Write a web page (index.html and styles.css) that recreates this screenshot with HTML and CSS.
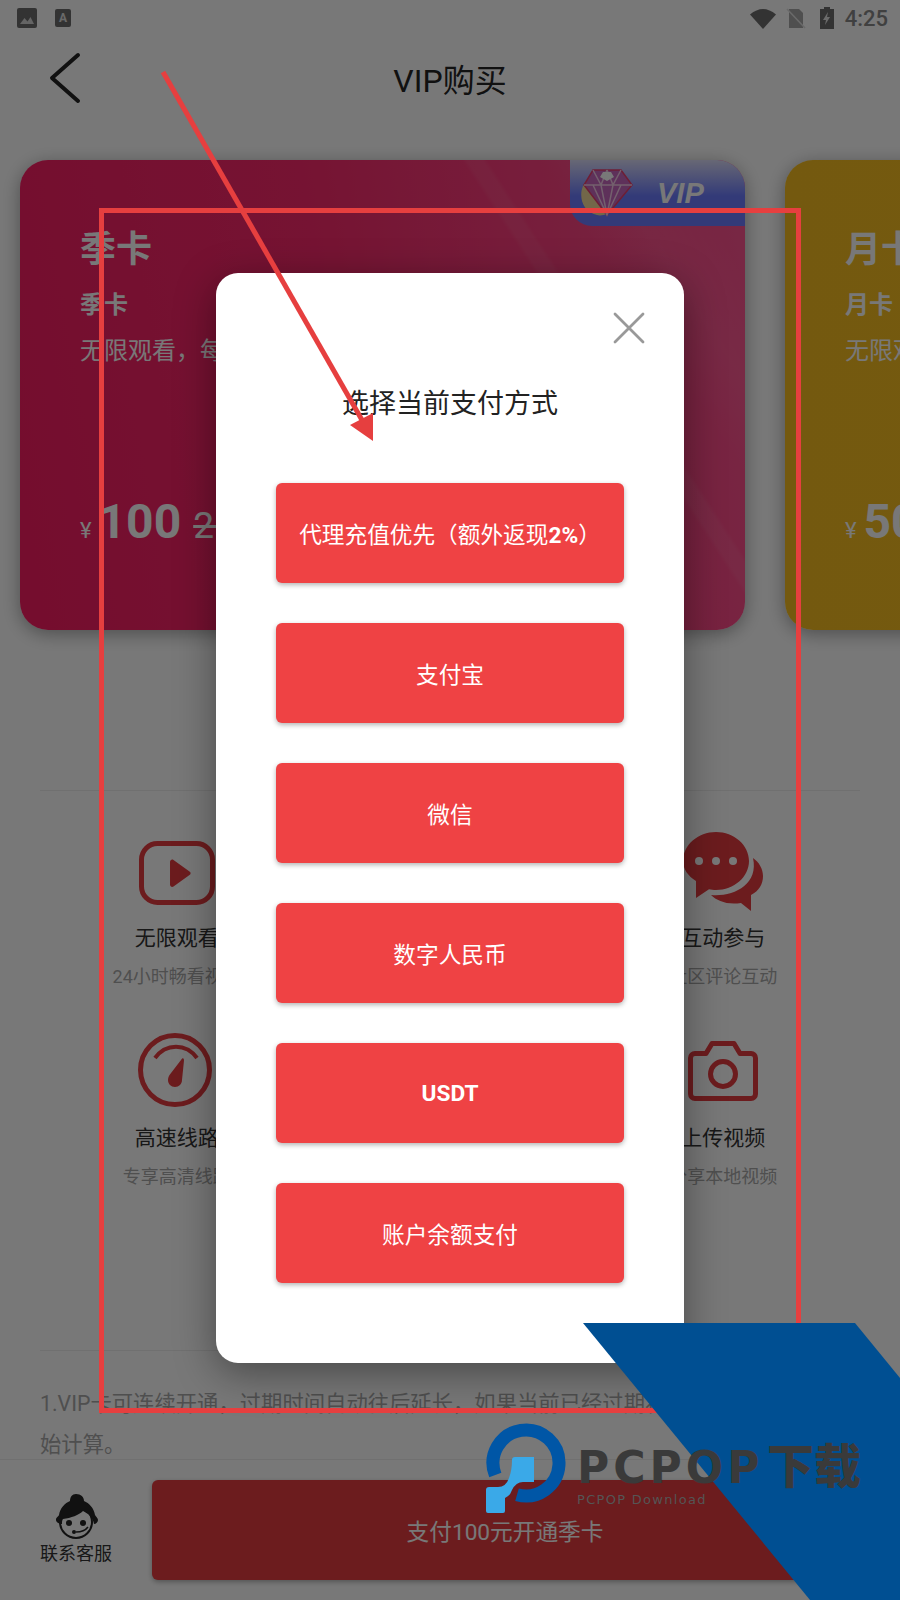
FILE: index.html
```html
<!DOCTYPE html>
<html lang="zh-CN">
<head>
<meta charset="utf-8">
<title>VIP购买</title>
<link rel="stylesheet" href="styles.css">
</head>
<body>
<div class="screen">
  <div class="page">
    <div class="status">
      <svg class="st-img" width="20" height="20" viewBox="0 0 20 20"><rect width="20" height="20" rx="2" fill="#6e6e6e"/><path d="M3 16l4.500-6 3 3.500 3-4.500 3.500 7z" fill="#d4d4d4"/></svg>
      <span class="st-a">A</span>
      <span class="st-space"></span>
      <svg class="st-wifi" width="26" height="21" viewBox="0 0 26 21"><path d="M0 6.500Q13-4.500 26 6.500L13 21z" fill="#6e6e6e"/></svg>
      <svg class="st-sim" width="20" height="21" viewBox="0 0 20 21"><path d="M3 1h10l4 4v15H3z" fill="#a8a8a8"/><path d="M1 1l18 19" stroke="#e0e0e0" stroke-width="1.600"/></svg>
      <svg class="st-bat" width="14" height="22" viewBox="0 0 14 22"><path d="M4 0h6v2h4v20H0V2h4z" fill="#6e6e6e"/><path d="M8 5L3 13h3l-1 5 5-8H7z" fill="#e4e4e4"/></svg>
      <span class="st-time">4:25</span>
    </div>

    <header class="bar">
      <svg class="back" width="36" height="56" viewBox="0 0 36 56"><path d="M30 4L4 27l26 23" fill="none" stroke="#242424" stroke-width="4" stroke-linecap="round" stroke-linejoin="round"/></svg>
      <h1 class="bar-title">VIP购买</h1>
      <span></span>
    </header>

    <main class="main">
      <section class="cards">
        <article class="card card-red">
          <div class="tag">
            <svg width="56" height="52" viewBox="0 0 56 52">
              <path d="M9 12C-2 22 0 44 18 48c3 1 7 0 10-1z" fill="#f2dc9c"/>
              <path d="M14 3h28l11 15-25 30L5 18z" fill="#c868c0" stroke="#e84070" stroke-width="1.500"/>
              <path d="M5 18h48M14 3l8 15 6 30 6-30 8-15M28 3l-6 15M28 3l6 15M14 18l14 30 14-30" fill="none" stroke="#f4cce8" stroke-width="1.500"/>
              <path d="M24 5h8l3 5-7 4-7-4z" fill="#fff"/>
            </svg>
            <span class="tag-text">VIP</span>
          </div>
          <h2 class="card-title">季卡</h2>
          <p class="card-sub">季卡</p>
          <p class="card-desc">无限观看，每日更新</p>
          <p class="price"><span class="yen">¥</span><b class="now">100</b><s class="old">250</s></p>
        </article>
        <article class="card card-gold">
          <h2 class="card-title">月卡</h2>
          <p class="card-sub">月卡</p>
          <p class="card-desc">无限观看，每日更新</p>
          <p class="price"><span class="yen">¥</span><b class="now">50</b></p>
        </article>
      </section>

      <section class="perks">
        <div class="perk">
          <svg class="perk-icon" width="80" height="80" viewBox="0 0 80 80"><rect x="4.500" y="12.500" width="71" height="59" rx="16" fill="none" stroke="#e63c40" stroke-width="5"/><path d="M33 31c0-2 2-3 3.500-2l16 11.500c1.500 1 1.500 2.500 0 3.500l-16 11.500c-1.500 1-3.500 0-3.500-2z" fill="#e63c40"/></svg>
          <div class="perk-name">无限观看</div>
          <div class="perk-text">24小时畅看视频</div>
        </div>
        <div class="perk"></div>
        <div class="perk">
          <svg class="perk-icon" width="80" height="80" viewBox="0 0 80 80"><path d="M33 1C51 1 66 14 66 30S51 59 33 59c-2.500 0-5-.300-7-.700L13 67V50C5 45 0 38 0 30 0 14 15 1 33 1z" fill="#e63c40"/><path d="M70 27c6 4 10 11 10 18 0 8-4 15-12 19v16l-10-8c-14 2-24-2-30-8 22 2 48-10 42-37z" fill="#e63c40"/><circle cx="16" cy="30" r="4" fill="#fff"/><circle cx="33" cy="30" r="4" fill="#fff"/><circle cx="50" cy="30" r="4" fill="#fff"/></svg>
          <div class="perk-name">互动参与</div>
          <div class="perk-text">社区评论互动</div>
        </div>
        <div class="perk">
          <svg class="perk-icon" width="80" height="80" viewBox="0 0 80 80"><circle cx="38" cy="39" r="34.500" fill="none" stroke="#e63c40" stroke-width="5"/><path d="M18 27C29 12 49 12 60 27" fill="none" stroke="#e63c40" stroke-width="4"/><path d="M44 29c1.500-2.500 3-2 3 .500L45 49c0 4-3 7-7 7s-7-3-7-7c0-2 .500-3 1.500-5z" fill="#e63c40"/></svg>
          <div class="perk-name">高速线路</div>
          <div class="perk-text">专享高清线路</div>
        </div>
        <div class="perk"></div>
        <div class="perk">
          <svg class="perk-icon" width="80" height="80" viewBox="0 0 80 80"><path d="M12 22.500h11l6-10h22l6 10h11c2.500 0 4.500 2 4.500 4.500v36c0 2.500-2 4.500-4.500 4.500H12c-2.500 0-4.500-2-4.500-4.500V27c0-2.500 2-4.500 4.500-4.500z" fill="none" stroke="#e63c40" stroke-width="5" stroke-linejoin="round"/><circle cx="40" cy="43" r="12.500" fill="none" stroke="#e63c40" stroke-width="5"/></svg>
          <div class="perk-name">上传视频</div>
          <div class="perk-text">分享本地视频</div>
        </div>
      </section>

      <section class="note">1.VIP卡可连续开通，过期时间自动往后延长，如果当前已经过期将从购买时刻开<br>始计算。</section>
    </main>

    <footer class="foot">
      <div class="service">
        <svg width="44" height="46" viewBox="0 0 44 46">
          <circle cx="22" cy="29" r="16" fill="#fff" stroke="#242424" stroke-width="2"/>
          <path d="M22 1c5 0 8 3 8 7 5 2 10 7 11 14 1 2 3 3 3 5s-2 4-4 4c-1-6-5-10-11-13-4 4-12 7-20 8-1 1-1 3-1 5-3 0-6-2-6-4 0-3 2-3 3-5 1-7 6-12 11-14 0-4 2-7 6-7z" fill="#242424"/>
          <circle cx="15" cy="30" r="3" fill="#242424"/>
          <circle cx="29" cy="30" r="3" fill="#242424"/>
          <path d="M22 39c5 0 9-1 12-5" fill="none" stroke="#242424" stroke-width="1.500"/>
          <circle cx="20" cy="39" r="2" fill="#242424"/>
        </svg>
        <span class="service-text">联系客服</span>
      </div>
      <button class="pay">支付100元开通季卡</button>
    </footer>
  </div>

  <div class="dim"></div>

  <div class="modal">
    <svg class="close" width="34" height="34" viewBox="0 0 34 34"><path d="M3 3l28 28M31 3L3 31" stroke="#999" stroke-width="2.800" stroke-linecap="round"/></svg>
    <h2 class="modal-title">选择当前支付方式</h2>
    <div class="methods">
      <button class="method">代理充值优先（额外返现<span class="latin">2%</span>）</button>
      <button class="method">支付宝</button>
      <button class="method">微信</button>
      <button class="method">数字人民币</button>
      <button class="method"><span class="latin">USDT</span></button>
      <button class="method">账户余额支付</button>
    </div>
  </div>

  <svg class="markup" width="900" height="1600" viewBox="0 0 900 1600">
    <rect x="101.500" y="210.500" width="697" height="1200" fill="none" stroke="#e63f3f" stroke-width="5"/>
    <path d="M163 72L362 420" stroke="#e63f3f" stroke-width="5" fill="none"/>
    <path d="M373 441L350 425 373 413z" fill="#e63f3f"/>
    <path d="M583 1323H855L900 1378V1600H810z" fill="#004f92"/>
    <path d="M495.300 1475A33 33 0 1 1 517 1494.700" fill="none" stroke="#0056a6" stroke-width="13"/>
    <path d="M512 1460Q512 1457 515 1457H534V1482H523Q516 1482 512 1490Q510 1496 505 1498V1511Q505 1513 503 1513H488Q486 1513 486 1511V1490Q486 1487 489 1487H498Q506 1487 509 1478Q512 1470 512 1460Z" fill="#3aa9e8"/>
  </svg>

  <div class="mark">
    <div class="mark-main"><span class="mark-latin">PCPOP</span><span class="mark-cjk">下载</span></div>
    <div class="mark-sub">PCPOP Download</div>
  </div>
</div>
</body>
</html>
```
FILE: styles.css
```css
* { box-sizing: border-box; }
html, body { margin: 0; padding: 0; }
body { font-family: Roboto, "Noto Sans CJK SC", sans-serif; background: #fff; }
h1, h2, p { margin: 0; font-weight: 400; }

.screen { position: relative; width: 900px; height: 1600px; overflow: hidden; }
.page { display: flex; flex-direction: column; height: 1600px; background: #fff; }

.status { display: flex; align-items: center; height: 36px; padding: 0 12px 0 17px; flex: none; }
.st-a { display: flex; align-items: center; justify-content: center; width: 16px; height: 18px; margin-left: 18px; border-radius: 2px; background: #6e6e6e; color: #e0e0e0; font-size: 12px; font-weight: 700; }
.st-space { flex: 1; }
.st-sim { margin-left: 10px; }
.st-bat { margin-left: 14px; }
.st-time { margin-left: 11px; font-size: 22px; font-weight: 500; color: #888; }

.bar { display: grid; grid-template-columns: 1fr auto 1fr; align-items: center; height: 86px; padding-left: 48px; padding-right: 48px; flex: none; }
.bar-title { margin-bottom: 3px; font-size: 32px; color: #242424; }

.main { flex: 1; min-height: 0; overflow: hidden; padding-top: 38px; }

.cards { display: flex; gap: 40px; padding-left: 20px; }
.card { position: relative; flex: none; display: flex; flex-direction: column; width: 725px; height: 470px; padding: 65px 60px 0; border-radius: 28px; overflow: hidden; color: #fff; box-shadow: 0 4px 18px rgba(0,0,0,.35); }
.card-red {
  background:
    linear-gradient(57deg, transparent 72.500%, rgba(255,255,255,.06) 73%, rgba(255,255,255,.06) 74.500%, transparent 75%),
    linear-gradient(57deg, transparent 80%, rgba(255,255,255,.05) 86%, transparent 93%),
    linear-gradient(80deg, #f81c62 0%, #fa2a6c 45%, #ff5592 100%);
}
.card-gold { background: linear-gradient(90deg, #f7be20, #f9c126); }
.card-title { font-size: 36px; font-weight: 700; line-height: 50px; }
.card-sub { margin-top: 12px; font-size: 24px; font-weight: 700; line-height: 36px; }
.card-desc { margin-top: 10px; font-size: 24px; line-height: 36px; white-space: nowrap; }
.price { display: flex; align-items: baseline; margin-top: 123px; line-height: 60px; white-space: nowrap; }
.yen { font-size: 22px; margin-right: 7px; }
.now { font-size: 48px; font-weight: 700; }
.old { margin-left: 12px; font-size: 37px; }

.tag { position: absolute; top: 0; right: 0; display: flex; align-items: center; width: 175px; height: 66px; padding-left: 9px; border-bottom-left-radius: 22px; background: linear-gradient(180deg, #dcdcf8 0%, #6c7cff 55%, #6c7cff 100%); }
.tag-text { margin-left: 22px; font-size: 29px; font-weight: 700; font-style: italic; font-family: "Liberation Sans", sans-serif; }

.perks { display: grid; grid-template-columns: repeat(3, 1fr); grid-auto-rows: 200px; margin: 160px 40px 0; padding-top: 40px; border-top: 1px solid #eee; }
.perk { display: flex; flex-direction: column; align-items: center; }
.perk-icon { flex: none; }
.perk-name { margin-top: 13px; font-size: 21px; line-height: 28px; color: #333; }
.perk-text { margin-top: 12px; font-size: 18px; line-height: 26px; color: #a8a8a8; white-space: nowrap; }

.note { margin: 119px 40px 0; padding-top: 32px; border-top: 1px solid #eee; font-size: 21.330px; line-height: 41px; color: #a8a8a8; white-space: nowrap; }

.foot { position: relative; display: flex; align-items: center; flex: none; height: 141px; padding: 0 42px 0 0; border-top: 1px solid #eee; background: #fff; }
.service { display: flex; flex-direction: column; align-items: center; width: 152px; }
.service-text { margin-top: 2px; font-size: 18px; line-height: 26px; color: #333; }
.pay { flex: 1; height: 100px; border: 0; border-radius: 6px; background: #e63c40; color: #fff; font: 400 22.670px Roboto, "Noto Sans CJK SC", sans-serif; box-shadow: 0 2px 5px rgba(0,0,0,.3); }

.dim { position: absolute; inset: 0; background: rgba(0,0,0,.53); }

.modal { position: absolute; left: 216px; top: 273px; display: flex; flex-direction: column; align-items: center; width: 468px; height: 1090px; border-radius: 22px; background: #fff; box-shadow: 0 10px 40px rgba(0,0,0,.4); }
.close { position: absolute; top: 38px; right: 38px; }
.modal-title { margin-top: 111px; font-size: 27px; line-height: 40px; color: #222; }
.methods { display: flex; flex-direction: column; gap: 40px; width: 348px; margin-top: 59px; }
.method { height: 100px; padding: 0; border: 0; border-radius: 6px; background: #ef4244; color: #fff; font: 400 22.670px Roboto, "Noto Sans CJK SC", sans-serif; box-shadow: 0 2px 5px rgba(0,0,0,.3); }
.latin { font-weight: 700; }

.markup { position: absolute; left: 0; top: 0; pointer-events: none; }

.mark { position: absolute; left: 577px; top: 1441px; color: #3a3a3a; }
.mark-main { display: flex; align-items: center; height: 52px; white-space: nowrap; }
.mark-latin { width: 190px; font: 700 44px "DejaVu Sans", sans-serif; letter-spacing: 4px; }
.mark-cjk { font-size: 47px; font-weight: 900; line-height: 52px; }
.mark-sub { margin-top: -1px; font: 400 13px "DejaVu Sans", sans-serif; letter-spacing: 1.300px; color: #555; }
```
